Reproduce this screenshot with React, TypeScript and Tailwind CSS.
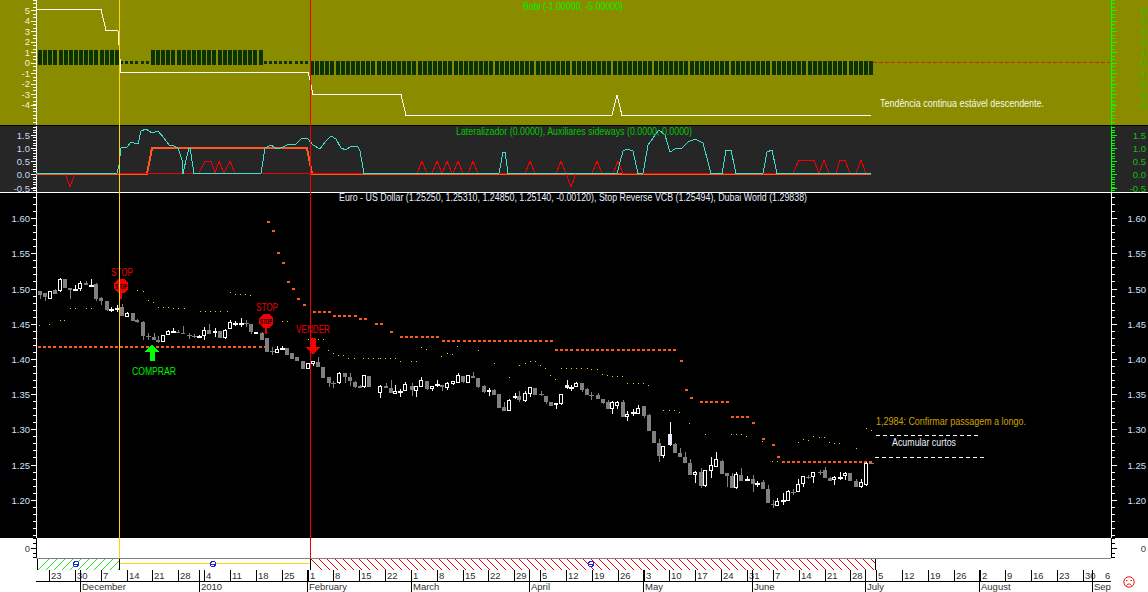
import React from "react";

type Kind = "g" | "h" | "c" | "x" | "s";
type Bar = [number, number, number, number, number, Kind];

// read off the chart: [x, top, bottom, wickTop, wickBottom, kind], scaled 3x from the crop origin
const segA: Bar[] = [
  [120,93,105,93,118,"g"],[135,100,112,100,122,"g"],[150,93,118,93,118,"h"],[165,90,103,87,103,"g"],[180,58,93,55,96,"h"],
  [195,58,85,58,85,"g"],[210,85,90,85,118,"g"],[225,87,87,75,92,"c"],[240,70,88,62,92,"h"],[258,68,76,62,76,"g"],
  [272,74,76,58,76,"c"],[288,72,118,68,122,"g"],[304,113,122,110,136,"g"],[320,122,150,122,152,"g"],[333,148,148,140,155,"c"],
  [350,143,143,136,155,"c"],[367,140,167,132,167,"g"],[380,158,170,155,170,"h"],[398,158,183,158,183,"g"],[412,180,186,178,190,"g"],
  [428,186,228,184,240,"g"],[443,228,228,218,240,"x"],[462,232,240,220,240,"g"],[475,240,246,228,248,"g"],[490,226,245,226,245,"h"],
  [503,213,226,210,226,"h"],[518,212,212,205,220,"c"],[535,216,220,210,220,"g"],[550,218,222,198,222,"g"],[567,225,225,218,237,"x"],
  [583,228,228,222,235,"x"],[598,228,228,226,230,"c"],[612,210,228,200,240,"h"],[628,210,222,192,222,"g"],[645,212,220,205,230,"h"],
  [660,212,233,212,233,"g"],[675,210,234,208,236,"h"],[691,187,208,180,208,"h"],[705,190,190,182,198,"c"],[722,190,190,175,200,"c"],
  [737,190,190,180,200,"x"],[752,192,216,192,222,"g"],[767,215,222,215,222,"h"],[785,218,240,215,240,"g"],[800,235,276,235,276,"g"],
  [815,272,272,262,285,"x"],[830,267,280,258,280,"h"],[845,263,263,258,265,"c"],[860,265,285,265,285,"g"],[876,280,298,278,298,"g"],
  [890,290,303,290,303,"g"],[908,303,327,303,327,"g"],[923,310,327,310,327,"h"],[938,304,312,304,318,"h"],[955,306,320,292,320,"g"],
  [970,320,355,320,355,"g"],[987,352,368,352,380,"g"],[1000,370,370,362,385,"x"],[1017,340,370,336,372,"h"],[1035,340,352,338,368,"g"],
  [1050,352,362,340,378,"g"],[1065,365,380,362,384,"g"],[1080,378,384,376,384,"g"],[1093,346,382,344,384,"h"],[1108,348,382,348,382,"g"],
];
const segB: Bar[] = [
  [0,138,158,136,175,"h"],[18,138,143,130,143,"g"],[33,145,160,120,160,"g"],[45,154,161,135,161,"h"],[61,152,152,148,170,"c"],
  [76,133,152,125,152,"h"],[95,138,150,130,168,"g"],[108,139,152,139,172,"h"],[124,121,140,112,140,"h"],[140,124,146,124,150,"g"],
  [155,137,146,137,152,"h"],[170,132,132,120,140,"c"],[185,135,140,135,152,"g"],[202,130,145,125,150,"h"],[218,124,132,124,135,"h"],
  [233,105,128,98,128,"h"],[248,108,125,108,130,"g"],[263,106,128,106,128,"h"],[278,108,114,97,114,"g"],[294,114,140,114,143,"g"],
  [311,139,155,135,158,"g"],[326,150,157,145,167,"h"],[342,150,165,148,165,"g"],[357,162,203,162,203,"g"],[372,200,213,185,213,"g"],
  [387,181,212,177,212,"h"],[404,169,169,160,178,"c"],[418,168,180,152,185,"g"],[434,160,182,153,185,"h"],[450,142,161,142,170,"h"],
  [466,145,165,145,165,"g"],[482,162,162,152,168,"x"],[497,168,187,168,192,"g"],[513,186,197,186,197,"g"],[527,190,195,190,207,"h"],
  [542,163,192,163,195,"h"],[561,136,143,120,148,"s"],[574,140,140,135,152,"c"],[588,129,140,125,140,"h"],[605,129,150,129,155,"g"],
  [621,147,165,145,165,"g"],[634,165,165,155,180,"x"],[653,165,177,160,177,"g"],[669,178,188,178,192,"g"],[684,187,207,180,207,"g"],
  [697,185,207,182,222,"h"],[712,187,197,183,207,"h"],[729,185,231,180,231,"g"],[742,221,230,213,243,"h"],[759,217,217,207,228,"c"],
  [775,204,221,195,221,"h"],[791,198,228,198,234,"g"],[807,225,273,222,273,"g"],[822,273,309,273,309,"g"],[837,309,348,296,365,"g"],
  [850,319,349,319,353,"h"],[869,282,314,246,317,"s"],[885,312,339,309,339,"g"],[900,339,351,324,351,"g"],[914,351,369,335,369,"g"],
  [930,369,405,358,405,"g"],[945,396,404,392,430,"h"],[962,396,438,384,444,"g"],[974,390,437,390,442,"h"],[992,375,393,350,414,"h"],
  [1007,358,381,336,381,"h"],[1025,362,403,360,403,"g"],[1040,400,408,400,441,"g"],[1056,408,443,400,443,"g"],[1068,402,443,396,447,"h"],
  [1084,405,423,384,423,"g"],[1101,416,416,408,423,"c"],[1118,417,431,405,456,"g"],[1131,430,430,422,440,"c"],[1149,426,447,420,447,"g"],
  [1164,447,489,435,489,"g"],[1179,493,493,480,504,"x"],[1191,484,497,474,497,"h"],
];
const segC: Bar[] = [
  [9,300,300,280,314,"c"],[24,272,304,270,304,"h"],[40,275,275,268,285,"x"],[54,252,275,238,275,"h"],[69,228,253,228,262,"h"],
  [85,231,231,225,238,"x"],[99,216,232,216,248,"h"],[119,216,216,210,224,"x"],[134,210,233,202,233,"g"],[150,235,243,230,243,"g"],
  [163,232,241,228,254,"h"],[180,231,231,217,240,"c"],[195,220,229,216,240,"h"],[210,218,243,218,243,"g"],[227,244,262,238,262,"g"],
  [242,247,261,236,263,"h"],[258,188,254,186,258,"h"],[272,190,190,188,192,"x"],
];

const stopRuns: [number, number, number][] = [
  [267,267,221],[272,272,230],[277,277,252],[282,282,262],[287,287,281],[292,292,288],[297,297,298],[303,308,304],[313,330,311],
  [333,355,315],[359,369,318],[375,385,323],[390,395,331],[400,437,336],[442,552,340],[555,676,349],[680,680,360],[685,685,389],
  [690,695,397],[700,727,401],[731,747,416],[752,757,422],[762,767,438],[772,772,444],[777,777,456],[782,870,461],
];
const dots: [number, number][] = [
  [39,325],[49,324],[60,320],[64,320],[70,308],[75,308],[86,308],[91,308],[137,290],[143,291],[148,300],[153,302],
  [158,307],[163,307],[168,307],[173,308],[178,308],[184,308],[200,311],[205,311],[210,311],[215,311],[220,311],[227,311],
  [230,292],[235,294],[240,294],[245,294],[250,295],[282,321],[287,321],[308,339],[313,339],[318,339],[323,339],[328,350],[333,353],
  [338,355],[343,355],[348,358],[354,358],[363,358],[368,358],[373,358],[378,358],[380,358],[385,358],[390,358],[395,358],
  [400,361],[411,361],[416,361],[421,347],[426,349],[441,356],[447,353],[452,354],[457,346],[478,350],[494,363],[509,377],
  [519,365],[525,363],[530,361],[535,361],[540,365],[545,368],[550,375],[555,379],[561,368],[566,368],[571,368],[576,368],[581,368],[587,368],
  [591,369],[597,369],[602,374],[607,375],[612,376],[617,376],[622,376],[627,383],[633,383],[638,383],[643,383],[648,385],
  [663,410],[669,410],[674,410],[679,412],[689,423],[705,434],[731,434],[736,434],[741,434],[746,436],[762,441],[772,461],[777,461],
  [798,442],[803,439],[808,440],[813,436],[819,437],[824,437],[829,442],[834,443],[839,443],[856,448],[866,428],[871,430],
];

const cyan = "36,173.5 117,173.5 119,165 121,148 127,147 131,142 134,143 138,144 141,131 146,129 152,133 158,131 164,138 169,145 174,146 178,148 182,160 183,173.5 186,160 189,148 190,148 194,173.5 261,173.5 265,148 271,145 277,149 283,147 287,145 296,144 302,138 308,139 313,145 320,149 326,141 331,136 336,139 341,148 346,150 351,146 358,147 360,151 364,173.5 499,173.5 503,152 505,152 508,173.5 617,173.5 623,151 627,149 633,151 638,173.5 643,173.5 648,145 653,138 659,130 665,135 670,152 675,149 682,148 688,142 695,139 703,143 711,173.5 722,173.5 726,150 731,150 736,173.5 763,173.5 767,152 772,150 777,173.5 871,173.5";
const red = "36,173.5 65,173.5 70,187 75,173.5 199,173.5 205,161 211,161 215,173.5 219,161 224,173.5 230,161 235,173.5 417,173.5 422,161 427,173.5 432,173.5 437,161 442,173.5 442,173.5 447,161 452,173.5 453,173.5 458,161 463,173.5 468,173.5 473,161 478,173.5 525,173.5 530,161 535,173.5 556,173.5 561,161 566,173.5 566,173.5 571,187 576,173.5 592,173.5 597,161 602,173.5 613,173.5 618,161 623,173.5 793,173.5 799,160 814,160 819,173.5 824,160 829,173.5 836,173.5 840,160 845,160 850,173.5 856,173.5 861,160 866,173.5 871,173.5";
const whiteLine = "36,9.5 101,9.5 106,30.5 118,30.5 119,45 121,72.5 308,72.5 310,80 313,94.5 401,94.5 406,115.5 612,115.5 617,95 622,115.5 871,115.5";

const weeks = ["23","30","7","14","21","28","4","11","18","25","1","8","15","22","1","8","15","22","29","5","12","19","26","3","10","17","24","31","7","14","21","28","5","12","19","26","2","9","16","23","30","6"];
const months: [string, number][] = [["December",80],["2010",199],["February",307],["March",411],["April",529],["May",643],["June",752],["July",865],["August",979],["Sep",1092]];

function range(n: number) {
  return Array.from({ length: n }, (_, i) => i);
}

function Chart({ x, y, w, h, children }: { x: number; y: number; w: number; h: number; children?: React.ReactNode }) {
  return (
    <svg width={w} height={h} viewBox={`${x} ${y} ${w} ${h}`} shapeRendering="crispEdges" className="block shrink-0">
      {children}
    </svg>
  );
}

function Label({ x, y, w, fill, size = 9.5, anchor, bold, children }: { x: number; y: number; w?: number; fill: string; size?: number; anchor?: "start" | "middle" | "end"; bold?: boolean; children: React.ReactNode }) {
  return (
    <text x={x} y={y} fill={fill} fontSize={size} fontWeight={bold ? 700 : undefined} textAnchor={anchor} textLength={w} lengthAdjust={w ? "spacingAndGlyphs" : undefined}>
      {children}
    </text>
  );
}

// left axis ticks + labels
function LeftAxis({ marks, ticks, color, tick }: { marks: [string, number][]; ticks: number[]; color: string; tick: string }) {
  return (
    <>
      {ticks.map((t) => <rect key={t} x={33} y={Math.round(t)} width={3} height={1} fill={tick} />)}
      {marks.map(([l, y]) => (
        <g key={l}>
          <rect x={31} y={Math.round(y)} width={5} height={1} fill={tick} />
          <Label x={30} y={y + 3.5} fill={color} anchor="end">{l}</Label>
        </g>
      ))}
    </>
  );
}

function RightAxis({ marks, ticks, color, tick }: { marks: [string, number][]; ticks: number[]; color: string; tick: string }) {
  return (
    <>
      {ticks.map((t) => <rect key={t} x={1112} y={Math.round(t)} width={3} height={1} fill={tick} />)}
      {marks.map(([l, y]) => (
        <g key={l}>
          <rect x={1112} y={Math.round(y)} width={5} height={1} fill={tick} />
          <Label x={1146} y={y + 3.5} fill={color} anchor="end">{l}</Label>
        </g>
      ))}
    </>
  );
}

function Candles({ data, ox, oy }: { data: Bar[]; ox: number; oy: number }) {
  return (
    <>
      {data.map(([z, t, b, wt, wb, k]) => {
        const cx = Math.round(ox + z / 3);
        const top = Math.round(oy + t / 3);
        const bot = Math.round(oy + b / 3);
        const wTop = Math.round(oy + wt / 3);
        const wBot = Math.round(oy + wb / 3);
        const col = k === "g" || k === "x" ? "#808080" : "#ffffff";
        return (
          <g key={z}>
            <rect x={cx} y={wTop} width={1} height={Math.max(wBot - wTop, 1)} fill={col} />
            {k === "g" && <rect x={cx - 2} y={top} width={4} height={Math.max(bot - top, 1)} fill={col} />}
            {k === "s" && <rect x={cx - 2} y={top} width={4} height={Math.max(bot - top, 1)} fill="#e8e8ff" />}
            {k === "h" && <rect x={cx - 1.5} y={top + 0.5} width={3} height={Math.max(bot - top - 1, 1)} fill="#000000" stroke="#ffffff" />}
            {(k === "c" || k === "x") && <rect x={cx - 2} y={top} width={5} height={k === "c" ? 2 : 1} fill={col} />}
          </g>
        );
      })}
    </>
  );
}

function StopSign({ cx, cy }: { cx: number; cy: number }) {
  const pts = [[-3,-7],[3,-7],[7,-3],[7,3],[3,7],[-3,7],[-7,3],[-7,-3]].map(([a, b]) => `${cx + a},${cy + b}`).join(" ");
  return (
    <g>
      <rect x={cx - 1} y={cy + 6} width={2} height={7} fill="#f00000" />
      <polygon points={pts} fill="#f00000" />
      <Label x={cx - 6} y={cy + 3} w={12} fill="#000000" size={7} bold>STOP</Label>
      <Label x={cx - 10} y={cy - 10} w={22} fill="#f00000" size={10}>STOP</Label>
    </g>
  );
}

function BlueMark({ x }: { x: number }) {
  return (
    <g>
      <circle cx={x} cy={564} r={2.5} fill="#ffffff" stroke="#2020e0" />
      <rect x={x - 2} y={564} width={5} height={1} fill="#2020e0" />
    </g>
  );
}

function TopPanel() {
  const ticks = range(36).map((i) => i * 3.48);
  const marks: [string, number][] = [["5",10],["4",20.5],["3",31],["2",41.5],["1",52],["0",62.5],["-1",73],["-2",83.5],["-3",94],["-4",104.5]];
  return (
    <div className="flex h-[125px] bg-[#8b8b00]">
      <Chart x={0} y={0} w={36} h={125}><LeftAxis marks={marks} ticks={ticks} color="#f4f4d8" tick="#ffffff" /></Chart>
      <Chart x={36} y={0} w={1075} h={125}>
        <rect x={36} y={0} width={1} height={125} fill="#ffffff" />
        {range(163).map((i) => {
          const x = Math.round(38 + 5.13 * i);
          if (x < 117 || (x > 149 && x < 262)) return <rect key={i} x={x} y={50} width={4} height={15} rx={1.5} fill="#0a3300" />;
          if (x < 308) return <rect key={i} x={x} y={61} width={3} height={3} rx={1} fill="#0a3300" />;
          return <rect key={i} x={x} y={61} width={4} height={14} rx={1.5} fill="#0a3300" />;
        })}
        <polyline points={whiteLine} fill="none" stroke="#ffffff" />
        <line x1={873} y1={62.5} x2={1110} y2={62.5} stroke="#c03000" strokeDasharray="4 2" />
        <Label x={523} y={10} w={100} fill="#00f000" size={10}>Bobi (-1.00000, -5.00000)</Label>
        <Label x={880} y={107} w={164} fill="#f8f8e8" size={10}>Tendência continua estável descendente.</Label>
      </Chart>
      <Chart x={1111} y={0} w={37} h={125}>
        <rect x={1111} y={0} width={1} height={125} fill="#00ff00" />
        <RightAxis marks={marks} ticks={ticks} color="#18c800" tick="#00ff00" />
      </Chart>
    </div>
  );
}

function MiddlePanel() {
  const ticks = range(26).map((i) => 127 + i * 2.61);
  const marks: [string, number][] = [["1.5",135],["1.0",148],["0.5",161],["0.0",174],["-0.5",188]];
  return (
    <div className="flex h-[66px] bg-[#262626]">
      <Chart x={0} y={126} w={36} h={66}><LeftAxis marks={marks} ticks={ticks} color="#c4d8f4" tick="#ffffff" /></Chart>
      <Chart x={36} y={126} w={1075} h={66}>
        <rect x={36} y={126} width={1} height={66} fill="#ffffff" />
        <polyline points="36,174 147,174 152,148 307,148 312,174 871,174" fill="none" stroke="#ff5a1e" strokeWidth={2} />
        <polyline points={red} fill="none" stroke="#f00000" />
        <polyline points={cyan} fill="none" stroke="#40e0d0" />
        <Label x={456} y={135} w={236} fill="#00c800" size={10}>Lateralizador (0.0000), Auxiliares sideways (0.0000, 0.0000)</Label>
      </Chart>
      <Chart x={1111} y={126} w={37} h={66}>
        <rect x={1111} y={126} width={1} height={66} fill="#00ff00" />
        <RightAxis marks={marks} ticks={ticks} color="#10c010" tick="#00ff00" />
      </Chart>
    </div>
  );
}

function MainPanel() {
  const ticks = range(50).map((i) => 197 + i * 7.04);
  const marks: [string, number][] = [["1.60",218],["1.55",253],["1.50",289],["1.45",324],["1.40",359],["1.35",394],["1.30",429],["1.25",465],["1.20",500]];
  return (
    <div className="flex h-[345px] bg-black">
      <Chart x={0} y={193} w={36} h={345}><LeftAxis marks={marks} ticks={ticks} color="#d0e0ff" tick="#ffffff" /></Chart>
      <Chart x={36} y={193} w={1075} h={345}>
        <rect x={36} y={193} width={1} height={345} fill="#ffffff" />
        {range(45).map((i) => <rect key={i} x={Math.round(38 + i * 5.13)} y={346} width={3} height={2} fill="#ff5a1e" />)}
        {stopRuns.flatMap(([a, b, y]) =>
          range(Math.floor((b - a) / 5.13) + 1).map((i) => <rect key={`${a}-${i}`} x={Math.round(a + i * 5.13)} y={y} width={3} height={2} fill="#ff5a1e" />)
        )}
        {dots.map(([x, y], i) => <rect key={i} x={x} y={y} width={1} height={1} fill="#ffd000" />)}
        <Candles data={segA} ox={0} oy={260} />
        <Candles data={segB} ox={380} oy={340} />
        <Candles data={segC} ox={780} oy={400} />
        <Label x={339} y={201} w={468} fill="#e8f0ff" size={10}>Euro - US Dollar (1.25250, 1.25310, 1.24850, 1.25140, -0.00120), Stop Reverse VCB (1.25494), Dubai World (1.29838)</Label>
        <StopSign cx={121} cy={286} />
        <StopSign cx={266} cy={321} />
        <polygon points="310,338 316,338 316,347 320,347 313,355 305,347 310,347" fill="#f00000" />
        <Label x={296} y={333} w={34} fill="#f00000" size={10}>VENDER</Label>
        <polygon points="152,344 159,352 155,352 155,361 150,361 150,352 145,352" fill="#00ff00" />
        <Label x={132} y={375} w={44} fill="#00f000" size={10}>COMPRAR</Label>
        <Label x={876} y={425} w={150} fill="#d0a000" size={10}>1,2984: Confirmar passagem a longo.</Label>
        <line x1={876} y1={435.5} x2={979} y2={435.5} stroke="#ffffff" strokeDasharray="4 3" />
        <Label x={892} y={446} w={64} fill="#e8f0ff" size={10}>Acumular curtos</Label>
        <line x1={875} y1={457.5} x2={984} y2={457.5} stroke="#ffffff" strokeDasharray="4 3" />
      </Chart>
      <Chart x={1111} y={193} w={37} h={345}>
        <rect x={1111} y={193} width={1} height={345} fill="#ffffff" />
        <RightAxis marks={marks} ticks={ticks} color="#d0e0ff" tick="#ffffff" />
      </Chart>
    </div>
  );
}

function VolumePanel() {
  const marks: [string, number][] = [["0",548]];
  return (
    <div className="flex h-5 bg-white">
      <Chart x={0} y={538} w={36} h={20}><LeftAxis marks={marks} ticks={[538,543,553,557]} color="#404040" tick="#000000" /></Chart>
      <Chart x={36} y={538} w={1075} h={20}><rect x={36} y={538} width={1} height={20} fill="#000000" /></Chart>
      <Chart x={1111} y={538} w={37} h={20}>
        <rect x={1111} y={538} width={1} height={20} fill="#000000" />
        <RightAxis marks={marks} ticks={[538,543,553,557]} color="#404040" tick="#000000" />
      </Chart>
    </div>
  );
}

function TimeAxis() {
  return (
    <div className="flex h-[34px] bg-white">
      <div className="w-9 shrink-0" />
      <Chart x={36} y={558} w={1075} h={34}>
        <rect x={37} y={558} width={1074} height={1} fill="#808080" />
        <rect x={119} y={563} width={191} height={1} fill="#ffd400" />
        {range(11).map((i) => <line key={i} x1={38 + i * 8} y1={570} x2={Math.min(49 + i * 8, 119)} y2={Math.max(559, 570 - (119 - 38 - i * 8))} stroke="#20e020" />)}
        {range(71).map((i) => <line key={i} x1={311 + i * 8} y1={559} x2={Math.min(322 + i * 8, 875)} y2={Math.min(570, 559 + 875 - 311 - i * 8)} stroke="#f00000" />)}
        {[37,119,310,875].map((x) => <rect key={x} x={x} y={559} width={1} height={11} fill="#000000" />)}
        <BlueMark x={76} />
        <BlueMark x={213} />
        <BlueMark x={591} />
        {weeks.map((l, i) => {
          const x = Math.round(49 + 25.85 * i);
          return (
            <g key={i}>
              {i < 41 && <rect x={x} y={570} width={1} height={11} fill="#000000" />}
              <Label x={i < 41 ? x + 2 : 1105} y={579} fill="#303030">{l}</Label>
            </g>
          );
        })}
        <rect x={36} y={581} width={1075} height={1} fill="#000000" />
        {months.map(([l, x]) => (
          <g key={l}>
            <rect x={x} y={570} width={1} height={22} fill="#000000" />
            <Label x={x + 2} y={590} fill="#303030">{l}</Label>
          </g>
        ))}
      </Chart>
      <Chart x={1111} y={558} w={37} h={34}>
        <g shapeRendering="auto" fill="none" stroke="#f01010">
          <circle cx={1129} cy={582} r={5.2} />
          <path d="M1126 580.5h1.5M1130.5 580.5h1.5M1126.5 585.5c1-2 4-2 5 0" />
        </g>
      </Chart>
    </div>
  );
}

export default function App() {
  return (
    <div className="relative h-[592px] w-[1148px] overflow-hidden bg-white font-['Liberation_Sans',Arial,sans-serif]">
      <TopPanel />
      <div className="h-px bg-black" />
      <MiddlePanel />
      <div className="h-px bg-white" />
      <MainPanel />
      <VolumePanel />
      <TimeAxis />
      <div className="absolute left-[119px] top-0 h-[558px] w-px bg-[#ffd400]" />
      <div className="absolute left-[310px] top-0 h-[558px] w-px bg-[#f00000]" />
    </div>
  );
}
